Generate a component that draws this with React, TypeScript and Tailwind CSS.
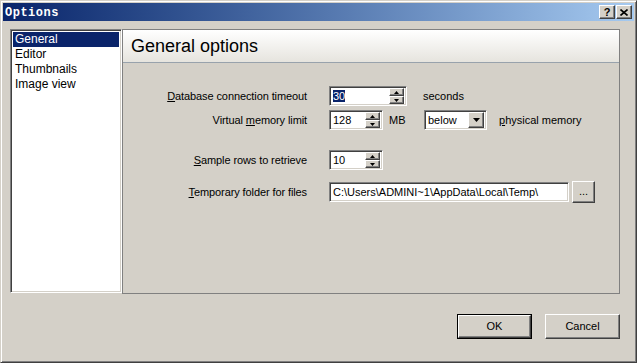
const font = { fontFamily: '"Liberation Sans", Arial, sans-serif' };

function Spin() {
    return (
        <div className="flex flex-col w-[15px] h-[16px] gap-0">
            {[0, 1].map((i) => (
                <div
                    key={i}
                    className="flex-1 flex items-center justify-center bg-[#d4d0c8] border border-t-white border-l-white border-r-[#404040] border-b-[#404040] shadow-[inset_-1px_-1px_0_#808080]"
                >
                    <svg width="5" height="3" viewBox="0 0 5 3">
                        {i === 0 ? (
                            <path d="M2.5 0 L5 3 L0 3 Z" fill="#000" />
                        ) : (
                            <path d="M0 0 L5 0 L2.5 3 Z" fill="#000" />
                        )}
                    </svg>
                </div>
            ))}
        </div>
    );
}

function Field({ width, children, spin = true }: { width: string; children: React.ReactNode; spin?: boolean }) {
    return (
        <div
            className={`${width} h-[20px] flex items-center bg-white border border-t-[#808080] border-l-[#808080] border-r-white border-b-white shadow-[inset_1px_1px_0_#404040,inset_-1px_-1px_0_#d4d0c8] pl-[3px] pr-[2px]`}
        >
            <div className="flex-1 text-[11px] text-black whitespace-nowrap overflow-hidden">{children}</div>
            {spin && <Spin />}
        </div>
    );
}

function Label({ children }: { children: React.ReactNode }) {
    return <div className="text-[11px] text-black text-right whitespace-nowrap tracking-[-0.1px]">{children}</div>;
}

function Button({ label, primary = false }: { label: string; primary?: boolean }) {
    return (
        <div
            className={`w-[75px] h-[25px] ${primary ? "border border-black" : ""}`}
        >
            <div className="w-full h-full flex items-center justify-center bg-[#d4d0c8] border border-t-white border-l-white border-r-[#404040] border-b-[#404040] shadow-[inset_-1px_-1px_0_#808080] text-[11px] text-black">
                {label}
            </div>
        </div>
    );
}

export default function App() {
    return (
        <div
            style={font}
            className="w-[637px] h-[363px] bg-[#d4d0c8] flex flex-col border border-t-[#d4d0c8] border-l-[#d4d0c8] border-r-[#404040] border-b-[#404040] shadow-[inset_1px_1px_0_#fff,inset_-1px_-1px_0_#808080] p-[2px]"
        >
            {/* title bar */}
            <div className="h-[18px] flex items-center justify-between bg-gradient-to-r from-[#0a246a] to-[#a6caf0] pl-[2px] pr-[2px]">
                <span
                    className="text-white font-bold text-[12px] tracking-[0.5px] pt-[1px]"
                    style={{ fontFamily: '"Liberation Mono", monospace' }}
                >
                    Options
                </span>
                <div className="flex gap-[1px]">
                    <div className="w-[16px] h-[14px] flex items-center justify-center bg-[#d4d0c8] border border-t-white border-l-white border-r-[#404040] border-b-[#404040] shadow-[inset_-1px_-1px_0_#808080] text-[11px] font-bold leading-none text-black">
                        ?
                    </div>
                    <div className="w-[16px] h-[14px] flex items-center justify-center bg-[#d4d0c8] border border-t-white border-l-white border-r-[#404040] border-b-[#404040] shadow-[inset_-1px_-1px_0_#808080]">
                        <svg width="8" height="7" viewBox="0 0 8 7">
                            <path d="M0.5 0.5 L7.5 6.5 M7.5 0.5 L0.5 6.5" stroke="#000" strokeWidth="1.6" />
                        </svg>
                    </div>
                </div>
            </div>

            {/* body */}
            <div className="flex-1 flex flex-col pt-[8px] pl-[7px] pr-[14px]">
                <div className="flex h-[265px]">
                    {/* list */}
                    <div className="w-[112px] h-[264px] bg-white border border-t-[#808080] border-l-[#808080] border-r-white border-b-white shadow-[inset_1px_1px_0_#404040,inset_-1px_-1px_0_#d4d0c8] p-[2px] text-[12px] leading-[15px] text-black">
                        <div className="bg-[#0a246a] text-white pl-[2px]">General</div>
                        <div className="pl-[2px]">Editor</div>
                        <div className="pl-[2px]">Thumbnails</div>
                        <div className="pl-[2px]">Image view</div>
                    </div>

                    {/* panel */}
                    <div className="flex-1 border border-[#808080] flex flex-col">
                        <div className="h-[33px] flex items-center pl-[8px] bg-gradient-to-b from-white to-[#e6e4de] border-b border-[#98a2ac]">
                            <span className="text-[18px] text-black">General options</span>
                        </div>

                        <div className="grid grid-cols-[184px_1fr] gap-x-[22px] items-center mt-[23px]">
                            <Label>
                                <u>D</u>atabase connection timeout
                            </Label>
                            <div className="flex items-center h-[20px]">
                                <Field width="w-[78px]">
                                    <span className="bg-[#0a246a] text-white">30</span>
                                </Field>
                                <span className="ml-[16px] text-[11px]">seconds</span>
                            </div>

                            <div className="h-[4px] col-span-2" />

                            <Label>
                                Virtual <u>m</u>emory limit
                            </Label>
                            <div className="flex items-center h-[20px]">
                                <Field width="w-[54px]">128</Field>
                                <span className="ml-[6px] w-[35px] text-[11px]">MB</span>
                                <div className="w-[63px] h-[20px] flex items-center bg-white border border-t-[#808080] border-l-[#808080] border-r-white border-b-white shadow-[inset_1px_1px_0_#404040,inset_-1px_-1px_0_#d4d0c8] pl-[3px] pr-[2px]">
                                    <span className="flex-1 text-[11px]">below</span>
                                    <div className="w-[16px] h-[16px] flex items-center justify-center bg-[#d4d0c8] border border-t-white border-l-white border-r-[#404040] border-b-[#404040] shadow-[inset_-1px_-1px_0_#808080]">
                                        <svg width="7" height="4" viewBox="0 0 7 4">
                                            <path d="M0 0 L7 0 L3.5 4 Z" fill="#000" />
                                        </svg>
                                    </div>
                                </div>
                                <span className="ml-[12px] text-[11px]">
                                    <u>p</u>hysical memory
                                </span>
                            </div>

                            <div className="h-[20px] col-span-2" />

                            <Label>
                                <u>S</u>ample rows to retrieve
                            </Label>
                            <div className="flex items-center h-[20px]">
                                <Field width="w-[54px]">10</Field>
                            </div>

                            <div className="h-[12px] col-span-2" />

                            <Label>
                                <u>T</u>emporary folder for files
                            </Label>
                            <div className="flex items-center h-[20px]">
                                <Field width="w-[240px]" spin={false}>
                                    C:\Users\ADMINI~1\AppData\Local\Temp\
                                </Field>
                                <div className="ml-[3px] w-[23px] h-[22px] flex items-center justify-center bg-[#d4d0c8] border border-t-white border-l-white border-r-[#404040] border-b-[#404040] shadow-[inset_-1px_-1px_0_#808080] text-[11px] leading-none pb-[2px]">
                                    ...
                                </div>
                            </div>
                        </div>
                    </div>
                </div>

                <div className="flex justify-end gap-[13px] mt-[20px]">
                    <Button label="OK" primary />
                    <Button label="Cancel" />
                </div>
            </div>
        </div>
    );
}
